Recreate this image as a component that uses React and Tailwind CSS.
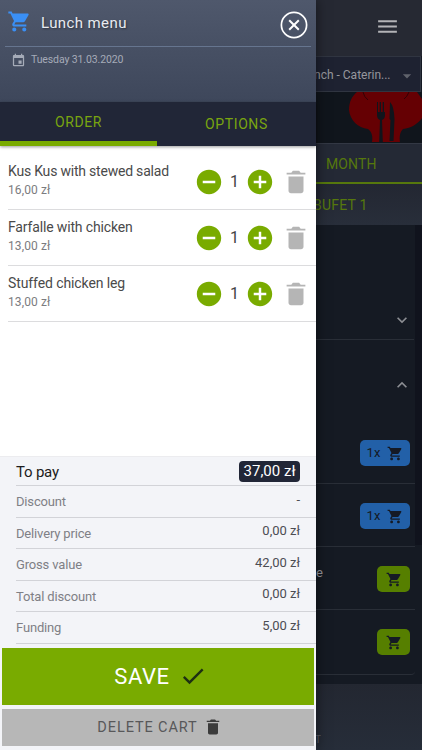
import React from "react";
import { IoMdCart, IoMdTrash, IoMdRemoveCircle, IoMdAddCircle } from "react-icons/io";
import { MdEvent, MdCheck, MdMenu, MdExpandMore, MdExpandLess, MdArrowDropDown } from "react-icons/md";

const items = [
  { name: "Kus Kus with stewed salad", price: "16,00 zł", ls: "tracking-[-0.21px]" },
  { name: "Farfalle with chicken", price: "13,00 zł", ls: "tracking-[-0.15px]" },
  { name: "Stuffed chicken leg", price: "13,00 zł", ls: "tracking-[-0.1px]" },
];

const totals = [
  ["Discount", "-"],
  ["Delivery price", "0,00 zł"],
  ["Gross value", "42,00 zł"],
  ["Total discount", "0,00 zł"],
  ["Funding", "5,00 zł"],
];

function Header() {
  return (
    <header className="h-[102px] bg-linear-to-b from-[#4f586c] to-[#3e475b] px-[5px] text-white">
      <div className="flex h-[47px] items-center border-b border-[#66758f]">
        <IoMdCart className="ml-[1px] -mt-[3px] size-[25px] text-[#3a8ff5]" />
        <h1 className="ml-[10px] mt-px flex-1 text-[15px] font-normal tracking-[0.4px] text-[#e8ebf0] [text-shadow:1px_1px_2px_#0006]">Lunch menu</h1>
        <svg viewBox="0 0 28 28" className="mr-[3px] mt-[3px] size-[28px]" fill="none" stroke="white">
          <circle cx="14" cy="14" r="12.6" strokeWidth="1.7" />
          <path d="M9.2 9.2l9.6 9.6M18.8 9.2l-9.6 9.6" strokeWidth="2" />
        </svg>
      </div>
      <div className="ml-[6px] mt-[5px] flex h-[16px] items-center text-[#a5abb8]">
        <MdEvent className="size-[15px]" />
        <span className="-mt-[1px] ml-[5px] text-[10.5px] tracking-[-0.12px]">Tuesday 31.03.2020</span>
      </div>
    </header>
  );
}

function CartRow({ item }) {
  return (
    <li className="ml-2 flex h-[56px] items-center border-b border-[#dcdcde]">
      <div className="-mt-[3px] flex-1">
        <div className={"text-sm leading-[19px] text-[#4a4a4a] " + item.ls}>{item.name}</div>
        <div className="text-xs leading-[18px] tracking-[0.1px] text-[#7c7c80]">{item.price}</div>
      </div>
      <IoMdRemoveCircle className="size-[30px] text-[#79ab00]" />
      <span className="w-[21px] text-center text-base text-[#444]">1</span>
      <IoMdAddCircle className="size-[30px] text-[#79ab00]" />
      <IoMdTrash className="ml-[6px] mr-[5px] size-[30px] text-[#b5b5b5]" />
    </li>
  );
}

function Drawer() {
  return (
    <aside className="z-10 flex h-full w-[316px] shrink-0 flex-col bg-white shadow-[0_0_12px_#0008]">
      <Header />
      <nav className="z-10 flex h-[44px] bg-[#212637] text-sm tracking-[0.6px] text-[#79a510] shadow-[0_1px_3px_#0006]">
        <div className="flex w-[157px] items-center justify-center border-b-[5px] border-[#79ab00]">ORDER</div>
        <div className="flex flex-1 items-center justify-center">OPTIONS</div>
      </nav>
      <ul className="flex-1 pt-[8px]">
        {items.map((item) => <CartRow key={item.name} item={item} />)}
      </ul>
      <section className="h-[294px] border-t border-[#ececef] bg-[#f3f4f8]">
        <div className="ml-4 flex h-[29px] items-center justify-between border-b border-[#d2d3d8] pr-4">
          <span className="mt-[2px] text-[15px] tracking-[-0.2px] text-[#1c1c20]">To pay</span>
          <span className="mt-px flex h-[21px] w-[61px] items-center justify-center rounded bg-[#212637] text-[15px] text-white">37,00 zł</span>
        </div>
        {totals.map(([label, value]) => (
          <div key={label} className="ml-4 flex h-[31.6px] items-center justify-between border-b border-[#d2d3d8] pr-4">
            <span className="pt-[1px] text-[13px] tracking-[-0.16px] text-[#7f8086]">{label}</span>
            <span className="-mt-[4px] text-[13px] text-[#4c4d53]">{value}</span>
          </div>
        ))}
        <button className="ml-[2px] mt-[4px] flex h-[57px] w-[312px] items-center justify-center bg-[#79ab00] pl-[5px] text-[22px] tracking-[0.6px] text-white">
          SAVE<MdCheck className="ml-[9px] size-[28px] text-[#1e3012]" />
        </button>
        <button className="ml-[2px] mt-[4px] flex h-[37px] w-[312px] items-center justify-center bg-[#b7b7b7] pl-[4px] text-[14.5px] tracking-[0.9px] text-[#58585a]">
          DELETE CART<IoMdTrash className="ml-[5px] size-[20px] text-[#3b3b3b]" />
        </button>
      </section>
    </aside>
  );
}

function ChefHat() {
  return (
    <svg viewBox="0 0 73 51" className="ml-[33px] h-[51px] w-[73px] shrink-0">
      <path fill="#650003" d="M8 0C3 4 0 10 0 18C1 28 9 36 19 37C23 40 24 45 23 50H51C50 45 51 40 54 37C62 36 69 32 73 26V7L68 0Z" />
      <path fill="#10151c" d="M28 10h1v10h1.700v-10h1.300v10h1.700v-10h1.300v10h1v3q0 4-3 5l.8 22h-3.600l.8-22q-3-1-3-5zM41 10q4 4 4.500 17l-1 22h-4l1-21-1-1z" />
      <path d="M14 0q1 5 5 8M60 0q-2 5-5 7" stroke="#310205" fill="none" />
    </svg>
  );
}

function CartButton({ count }) {
  return count ? (
    <div className="flex h-[26px] w-[50px] items-center justify-center gap-[6px] rounded-[5px] bg-[#2260a8] text-[13px] text-[#151a25]">
      {count}<IoMdCart className="size-[17px]" />
    </div>
  ) : (
    <div className="flex h-[26px] w-[33px] items-center justify-center rounded-[5px] bg-[#567f00] text-[#151a25]">
      <IoMdCart className="size-[17px]" />
    </div>
  );
}

function Backdrop() {
  return (
    <main className="flex h-full w-[106px] flex-col overflow-hidden bg-[#151a23]">
      <div className="flex h-[56px] shrink-0 items-center justify-end bg-[#262933] pr-[22px] text-[#b3b3b7]">
        <MdMenu className="-mt-[4px] size-[25px]" />
      </div>
      <div className="mr-px flex h-[36px] shrink-0 items-center border border-l-0 border-[#303541] bg-[#1e2231] text-xs text-[#96979d]">
        <span className="-ml-[2px] mt-px flex-1 whitespace-nowrap">nch - Caterin...</span>
        <MdArrowDropDown className="mr-[3px] mt-[3px] size-[20px] text-[#60636c]" />
      </div>
      <div className="h-[51px] shrink-0 bg-[#10151c]"><ChefHat /></div>
      <div className="flex h-[41px] shrink-0 items-center border-b-2 border-t border-b-[#56780d] border-t-[#333844] bg-[#242935] pl-[10px] pt-px text-sm tracking-[0.1px] text-[#56780d]">MONTH</div>
      <div className="flex h-[41px] shrink-0 items-center bg-linear-to-b from-[#232732] to-[#282e3a] text-sm tracking-[0.2px] text-[#56780d]">
        <span className="-ml-[3px]">BUFET 1</span>
      </div>
      <div className="flex h-[459px] shrink-0">
        <div className="flex w-[98px] flex-col">
          <div className="flex h-[115px] items-end justify-end border-b border-[#292e37] pb-[9px] pr-[2px] text-[#8c8e93]"><MdExpandMore className="size-[20px]" /></div>
          <div className="flex h-[81px] items-center justify-end pr-[2px] pt-[9px] text-[#8c8e93]"><MdExpandLess className="size-[20px]" /></div>
          <div className="-mr-px flex h-[63px] items-center justify-end border-b border-[#292e37] pr-[5px] pt-[2px]"><CartButton count="1x" /></div>
          <div className="-mr-px flex h-[63px] items-center justify-end border-b border-[#292e37] pr-[5px] pt-[2px]"><CartButton count="1x" /></div>
          <div className="-mr-px flex h-[63px] items-center justify-between border-b border-[#292e37] pr-[5px] pt-[2px]"><span className="-mt-[12px] text-[13px] text-[#96979d]">e</span><CartButton /></div>
          <div className="-mr-px flex h-[65px] items-center justify-end rounded-br border-b border-[#292e37] pr-[5px]"><CartButton /></div>
        </div>
        <div className="ml-px h-[320px] flex-1 bg-[#10131d]" />
      </div>
      <div className="flex flex-1 items-end bg-linear-to-b from-[#232731] to-[#262d39] pb-[3px] text-[10px] text-[#5a5e67]">
        <span className="-ml-px">T</span>
      </div>
    </main>
  );
}

export default function App() {
  return (
    <div className="flex h-[750px] w-[422px] overflow-hidden font-[Roboto,sans-serif]">
      <Drawer />
      <Backdrop />
    </div>
  );
}
